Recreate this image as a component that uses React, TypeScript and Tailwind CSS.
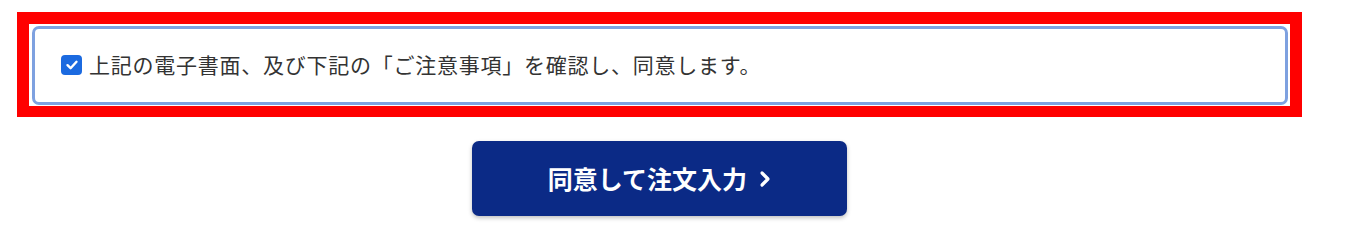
import React from "react";

export default function App() {
  return (
    <div
      className="w-[1346px] h-[246px] bg-white"
      style={{ fontFamily: '"Noto Sans CJK JP", "Noto Sans", sans-serif' }}
    >
      <div className="pt-[12px] pl-[17px] w-[1302px]">
        <div className="border-[12px] border-[#ff0000] border-b-[11px] pt-[2px] pl-[3px] pr-[2px] pb-[1px]">
          <div className="h-[79px] border-[3px] border-[#7ea1e0] rounded-[7px] flex items-center pl-[26px]">
            <span className="w-[21px] h-[20px] rounded-[4px] bg-[#1b6ae0] flex items-center justify-center shrink-0 -mt-[1px]">
              <svg width="14" height="14" viewBox="0 0 14 14" fill="none">
                <path d="M2.5 7.2 L5.6 10.2 L11.5 3.8" stroke="white" strokeWidth="2.4" strokeLinecap="round" strokeLinejoin="round" />
              </svg>
            </span>
            <span className="ml-[7px] text-[21px] leading-none text-[#333333] tracking-[0.75px] -mt-[2px]">
              上記の電子書面、及び下記の「ご注意事項」を確認し、同意します。
            </span>
          </div>
        </div>
        <div className="flex justify-center mt-[24px]">
          <button className="w-[375px] h-[75px] rounded-[7px] bg-[#0b2a86] shadow-[0_2px_4px_rgba(0,0,0,0.25)] flex items-center justify-center text-white font-bold text-[25px] leading-none">
            <span>同意して注文入力</span>
            <svg className="ml-[12px]" width="12" height="18" viewBox="0 0 12 18" fill="none">
              <path d="M3 3 L9 9 L3 15" stroke="white" strokeWidth="3.2" strokeLinecap="round" strokeLinejoin="round" />
            </svg>
          </button>
        </div>
      </div>
    </div>
  );
}
